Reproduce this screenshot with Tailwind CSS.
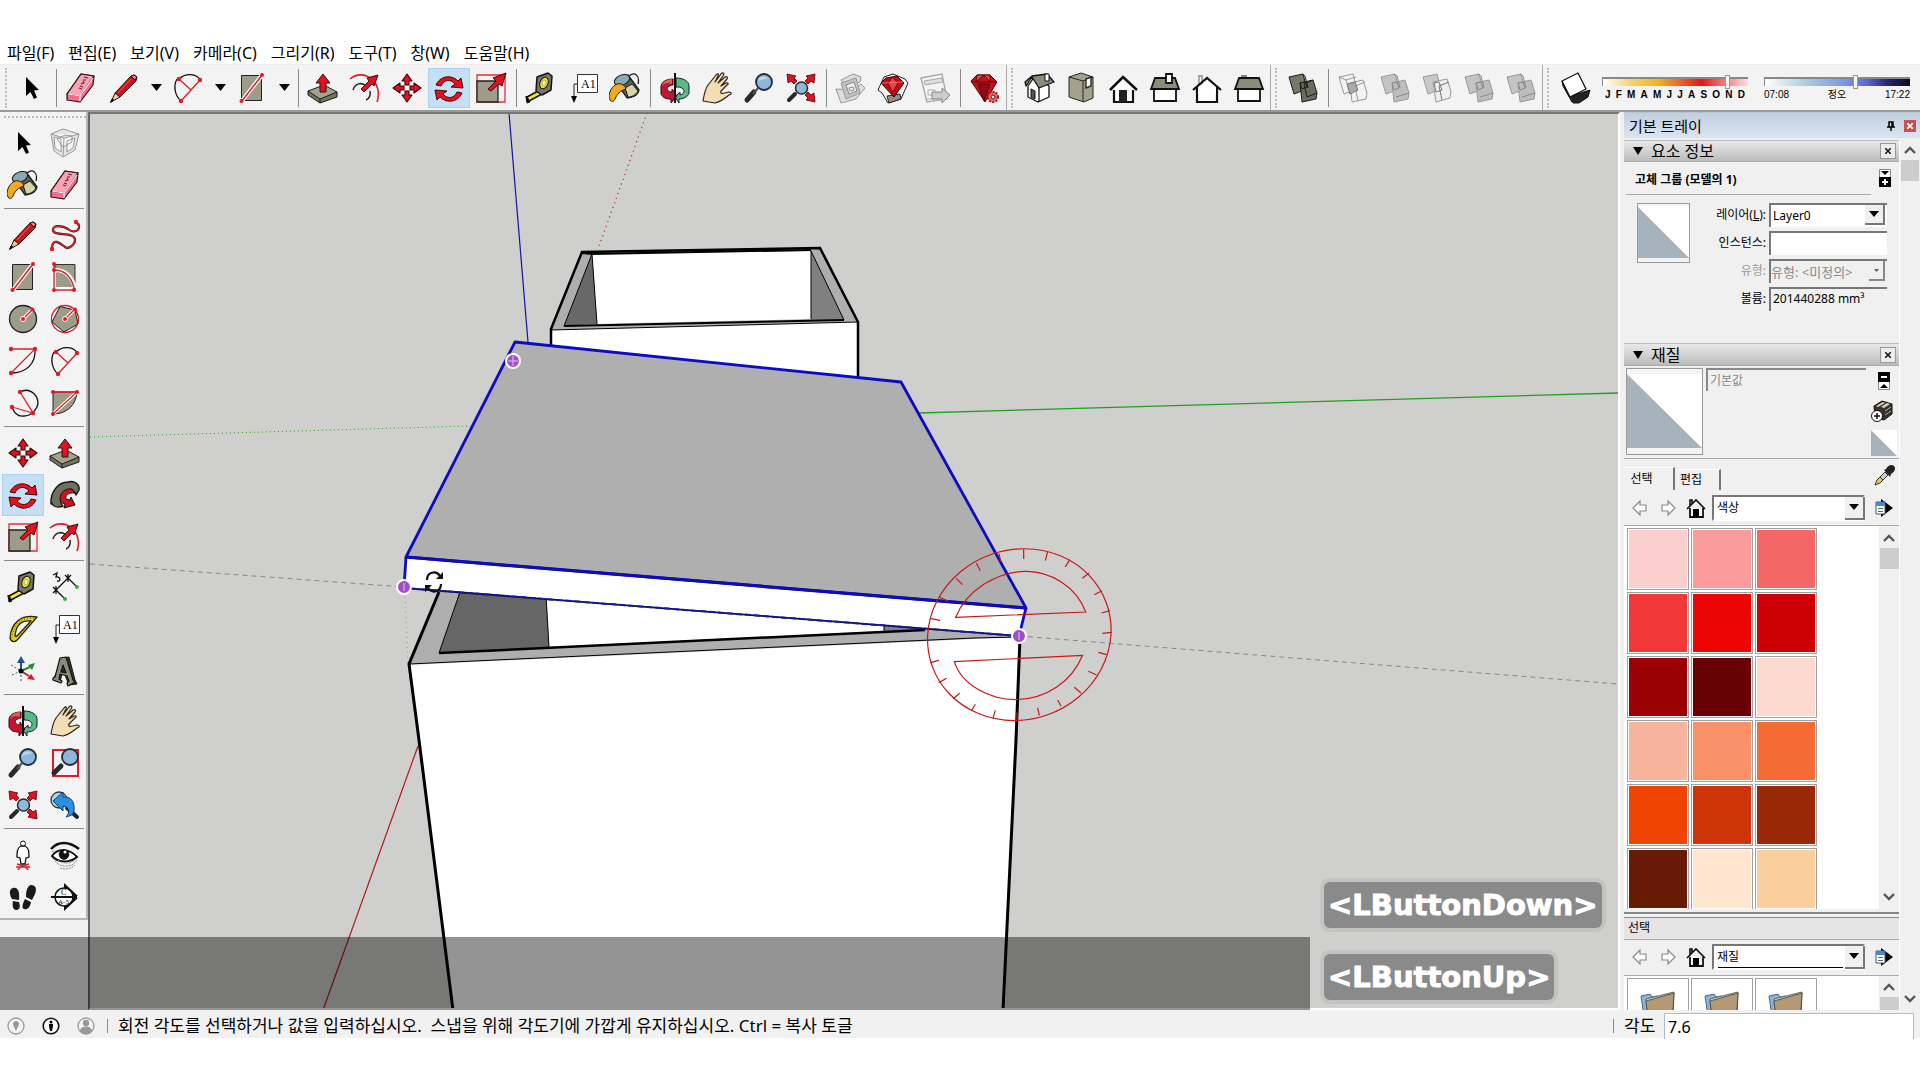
<!DOCTYPE html>
<html lang="ko">
<head>
<meta charset="utf-8">
<title>SketchUp</title>
<script src="https://cdn.jsdelivr.net/npm/@tailwindcss/browser@4"></script>
</head>
<body class="flex h-screen flex-col overflow-hidden bg-white pt-[38px] pb-[42px] font-['Noto_Sans','Noto_Sans_CJK_KR',sans-serif] text-black">

<svg class="hidden" aria-hidden="true">
  <defs>
    <symbol id="cursor" viewBox="0 0 32 32"><path d="M11 5v19l4.500-4 3.500 7 3-1.500-3-7 5-.5z"/></symbol>
    <symbol id="eraser" viewBox="0 0 32 32" stroke="#2a1015" stroke-linejoin="round" stroke-width="1.200"><path fill="#f26d88" d="M2 22 16 2l13 2-1 9-13 17-13-2z"/><path fill="#fba3b4" d="M2 22 16 2l13 2-14 20z"/><path fill="none" stroke="#fff" d="M15 24v5M3 22l12 2L28 6"/><path fill="none" stroke="#7a1c30" d="m14 16 3 1m-2-3 3 1m-2-3 3-1-1-2m0-1 3 0m-2-3 4 1"/></symbol>
    <symbol id="pencil" viewBox="0 0 32 32" stroke="#1c1010" stroke-linejoin="round"><path fill="#c9171e" d="M7 21 23 4l3-1 3 2-1 4-16 16z"/><path fill="#e4cf9c" d="M7 21 3 30l9-5z"/><path d="m4 27-1.500 3.500L6 28z"/><path fill="#e88" d="m23 4 3-1 3 2-2 3z"/><path fill="none" stroke="#ef5a5a" d="M10 21 23 7"/></symbol>
    <symbol id="arc" viewBox="0 0 32 32" fill="none" stroke-width="1.300"><path stroke="#111" d="M7 7C14 0 25 2 28 8M5 7C1 14 3 24 9 29"/><path stroke="#d8202a" d="m28 8-19 21M7 7l12 11"/><g fill="#e01b26"><circle cx="7" cy="7" r="2.200"/><circle cx="28" cy="8" r="2.200"/><circle cx="9" cy="29" r="2.200"/></g></symbol>
    <symbol id="rect" viewBox="0 0 32 32"><path fill="#9c9c88" stroke="#222" d="M5.500 3.500h20v25h-20z"/><path stroke="#fff" stroke-width="4" d="m6 29 20-26"/><path stroke="#d8202a" stroke-width="1.500" d="m6 29 20-26"/><g fill="#e01b26"><circle cx="5.500" cy="29" r="2"/><circle cx="26" cy="3" r="2"/></g></symbol>
    <symbol id="push" viewBox="0 0 32 32" stroke="#1b1b18" stroke-linejoin="round"><path fill="#74745f" d="M1 19v4l12 8 17-6v-5z"/><path fill="#a3a38d" d="m1 19 16-6 13 7-17 7z"/><path d="M13 27v4" /><path fill="#e5101d" d="M13 20v-9H9l7-9 7 9h-4v9z"/></symbol>
    <symbol id="offset" viewBox="0 0 32 32" fill="none"><path stroke="#d8202a" stroke-width="1.600" d="M1 7c14-12 34 4 27 23"/><path stroke="#222" stroke-width="1.500" d="M4 18c2-7 9-8 13-4M21 19c1 4-1 8-4 9"/><path fill="#e5101d" stroke="#40060a" d="m12 17 8-8-2-3 11-3-4 11-2-2-8 8z"/></symbol>
    <symbol id="move" viewBox="0 0 32 32" fill="#e5101d" stroke="#330508" stroke-width="1.100" stroke-linejoin="round"><path id="mv" d="m16 2 5 7h-3v4h-4V9h-3z"/><use href="#mv" transform="rotate(90 16 16)"/><use href="#mv" transform="rotate(180 16 16)"/><use href="#mv" transform="rotate(270 16 16)"/></symbol>
    <symbol id="rotate" viewBox="0 0 32 32" fill="#e5101d" stroke="#40060a" stroke-linejoin="round"><path id="rt" d="M3 13C7 4 18 2 25 9l3-3 2 10-12-1 4-3C18 7 11 7 8 14z"/><use href="#rt" transform="rotate(180 16 17)"/></symbol>
    <symbol id="scale" viewBox="0 0 32 32"><path fill="none" stroke="#e0303a" stroke-width="1.300" d="M2 3h28v27H2z"/><path fill="#9c9c88" stroke="#222" stroke-width="1.300" d="M2 9h21v21H2z"/><path fill="#e5101d" stroke="#40060a" d="m13 17 8-8-3-3 13-5-4 13-3-2-8 7z"/></symbol>
    <symbol id="tape" viewBox="0 0 32 32" stroke="#111" stroke-linejoin="round"><path fill="#f4e91f" stroke-width="1.500" d="m2 25 13-7 2 4-13 7z"/><path d="m1 24 4 6-3 1-1-6z"/><path fill="#777765" stroke-width="1.500" d="m12 5 11-4 4 3-1 14-9 5-6-4z"/><ellipse cx="19" cy="11" rx="4" ry="6" fill="#f4e91f" transform="rotate(20 19 11)"/><ellipse cx="19" cy="11" rx="2" ry="3" fill="#f9f59c" stroke="#aa8"/></symbol>
    <symbol id="text" viewBox="0 0 32 32"><path fill="#fff" stroke="#333" d="M10.500 2.500h20v18h-20z"/><path fill="none" stroke="#222" d="M10 12H7v13"/><path d="M4 24h6l-3 7z"/><text x="14" y="16" font-size="12" font-family="Liberation Serif, serif">A1</text></symbol>
    <symbol id="bucket" viewBox="0 0 32 32" stroke="#1a1a1a" stroke-linejoin="round"><path fill="none" stroke-width="1.300" d="M20 4c6-5 11 0 9 8"/><path fill="#5e5e50" stroke-width="1.300" d="M6 9 19 3l11 15c-1 6-8 8-12 8z"/><path fill="#d9d3a8" d="m16 16 7-4 6 7c-2 4-6 6-10 6z"/><ellipse cx="13" cy="8" rx="8" ry="5" fill="#89a9b5" transform="rotate(-22 13 8)"/><path fill="#f4a81a" d="M8 12C3 14 0 20 0 25c1 5 4 6 6 2 2-5 5-8 11-10-1-4-5-6-9-5z"/></symbol>
    <symbol id="orbit" viewBox="0 0 32 32" stroke-linejoin="round"><path fill="#59b983" stroke="#123" d="M17 6c7 0 13 3 13 8v7c-1 4-6 6-10 6v4l-4-6 5-5v3c4-1 5-4 3-6-2-2-4-2-7-2z"/><path fill="#c31432" stroke="#3a0610" d="M14 7C7 7 2 10 2 15v7c2 4 5 5 10 5v4l6-7-5-7v3c-4 0-6-3-4-5 1-1 3-2 5-2z"/><path fill="#cf6259" d="M13 7C8 7 3 10 3 14c2-3 6-4 10-2z"/><path stroke="#111" stroke-width="2" d="M16 1v30"/></symbol>
    <symbol id="hand" viewBox="0 0 32 32"><path fill="#f3ddb5" stroke="#2d2518" stroke-width="1.200" stroke-linejoin="round" d="M2 29c1-6 2-12 5-16l8-10c2-2 3-1 2 1l-3 6 6-8c2-2 4-1 2 2l-5 7 7-6c2-1 3 0 2 2l-6 7 5-3c2-1 3 1 1 2l-6 6c-1 3 1 3 8 1 3 0 3 2 0 3-7 6-10 7-14 8z"/></symbol>
    <symbol id="zoom" viewBox="0 0 32 32"><path stroke="#252a30" stroke-width="5" stroke-linecap="round" d="m4 28 7-8"/><path stroke="#555" stroke-width="2" d="m10 22 5-6"/><circle cx="21" cy="10" r="8" fill="#8db8dc" stroke="#252a30" stroke-width="1.800"/><path fill="#bcd8ee" d="M15 9c1-5 8-6 10-2-4-1-6 1-10 2z"/></symbol>
    <symbol id="zoomall" viewBox="0 0 32 32"><path stroke="#252a30" stroke-width="4" stroke-linecap="round" d="m4 28 6-6"/><circle cx="16.500" cy="16" r="6" fill="#8db8dc" stroke="#252a30" stroke-width="1.500"/><g fill="#e5101d" stroke="#40060a" stroke-width=".8"><path d="m2 2 9 2-2 2 3 3-3 3-3-3-3 2zM30 2l-9 2 2 2-3 3 3 3 3-3 3 2zM30 30l-9-2 2-2-3-3 3-3 3 3 3-2z"/></g></symbol>
    <symbol id="zoomwin" viewBox="0 0 32 32"><path fill="none" stroke="#e01b26" stroke-width="2" d="M4 3h25v26H4z"/><path stroke="#252a30" stroke-width="5" stroke-linecap="round" d="m5 26 7-7"/><circle cx="21" cy="10" r="8" fill="#8db8dc" stroke="#252a30" stroke-width="1.800"/></symbol>
    <symbol id="zoomprev" viewBox="0 0 32 32"><circle cx="10" cy="11" r="8" fill="#b7d3e8" stroke="#333" stroke-width="1.300"/><path stroke="#1c1f24" stroke-width="4" stroke-linecap="round" d="m18 19 10 9"/><path fill="#2b8fe4" stroke="#0d3c68" stroke-linejoin="round" d="M4 12 14 3v5c8-1 12 5 11 14-1 4-4 5-8 6 4-4 4-10-3-11v5z"/></symbol>
    <symbol id="whouse" viewBox="0 0 32 32" fill="#ddd" stroke="#999"><path d="M6 8 18 2l8 3-1 5-15 4zM1 17l5 14 15-4 9-11-4-4-9 6z"/><path fill="#c2c2c2" d="m6 11 15-5 4 15-14 6z"/><path fill="#eee" stroke="#888" d="m11 13 8-3 3 9-8 3zM14 16l4-1 1 3-4 1z"/></symbol>
    <symbol id="wruby" viewBox="0 0 32 32" stroke="#222" stroke-linejoin="round"><path fill="#f4f4f4" d="m7 5 9-3 12 5 3 4-7 16-13 4-6-10-4-3z"/><path fill="#8f8f84" d="m10 24 13-2 1 5-12 4z"/><path fill="#b80f18" stroke="#400" d="m4 11 5-5 11-2 7 7-10 14z"/><path fill="#e64348" stroke="#700" d="m11 12 4-7 6 6-5 9z"/><path fill="none" stroke="#f77" stroke-width=".8" d="m5 11 21-1"/></symbol>
    <symbol id="wsend" viewBox="0 0 32 32" stroke="#aaa"><path fill="#f4f4f4" stroke-width="1.400" d="m2 6 21-4 5 25-20 3z"/><path fill="#ddd" d="m5 9 18-3 1 4-18 3z"/><path fill="none" d="M9 18h7v5H9zM8 27h8"/><path fill="#ccc" stroke="#888" d="M13 20h10v-4l8 7-8 8v-4H13z"/></symbol>
    <symbol id="ruby" viewBox="0 0 32 32" stroke="#5c060b" stroke-linejoin="round"><path fill="#c4111a" d="m2 9 6-6h13l7 7-12 20z"/><path fill="#8f0c13" d="m9 12 6 17 6-17z"/><path fill="#e54a4c" d="m8 3-1 7 8-7 6 7V3z"/><path d="M2 10h26" /><circle cx="24" cy="25" r="5" fill="#d77" stroke="#a11" stroke-width="2" stroke-dasharray="2 1.200"/><circle cx="24" cy="25" r="2" fill="#f3f3f3"/></symbol>
    <symbol id="iso" viewBox="0 0 32 32" stroke="#111" stroke-linejoin="round"><path fill="#fff" stroke-width="1.300" d="M5 14 12 4l14 10v11l-11 5-10-5z"/><path fill="#8b8b7a" stroke-width="1.300" d="m2 10 7-6 15-2 7 8-15 6-7-11-6 9z"/><path stroke-width="1.300" d="M16 16v14"/><path fill="#555" d="m8 17 4 2v8l-4-2z"/><path fill="#fff" d="M22 2h4v7h-4z"/></symbol>
    <symbol id="top" viewBox="0 0 32 32" stroke="#26261f"><path fill="#a3a38d" d="m4 5 12-4 12 4v21l-9 4-15-5z"/><path fill="none" d="M4 5l14 4 10-4M18 9v21"/><path fill="#fff" stroke-width="1.400" d="m21 7 5-2v9l-5 2z"/></symbol>
    <symbol id="front" viewBox="0 0 32 32"><path fill="#fff" stroke="#111" stroke-width="2.200" d="M7 17v13h19V17"/><path fill="#fff" stroke="#111" stroke-width="2.600" d="M3 18 16 5l14 13"/><path fill="#222" d="M12 18h8v12h-8z"/></symbol>
    <symbol id="right" viewBox="0 0 32 32" stroke="#111" stroke-width="1.800"><path fill="#fff" d="M5 16h22v13H5z"/><path fill="#8b8b7a" d="m6 6-4 11h28L26 6z"/><path fill="#fff" d="M17 2h6v9h-6z"/></symbol>
    <symbol id="back" viewBox="0 0 32 32" stroke="#111" stroke-width="2.200"><path fill="#fff" stroke="#888" stroke-width="1.400" d="M8 4h3v8H8z"/><path fill="#fff" d="M6 15v15h20V15"/><path fill="none" stroke-width="2.200" d="M2 18 16 6l14 12"/><path fill="#fff" stroke="none" d="m16 8 9 8v6H7v-6z"/></symbol>
    <symbol id="left" viewBox="0 0 32 32" stroke="#111" stroke-width="1.800"><path fill="#fff" d="M5 16h22v13H5z"/><path fill="#8b8b7a" d="m6 6-4 11h28L26 6z"/><path stroke="#777" d="M8 4h6"/></symbol>
    <symbol id="shell" viewBox="0 0 32 32" stroke="#1c1c18" stroke-linejoin="round"><path fill="#77776a" d="m2 5 14-3 4 15-13 5z"/><path fill="#6b6b5f" d="m13 11 13-3 4 13-1 6-14 3z"/><path fill="none" d="m15 2 3 2 3 12M26 8l-9 4 3 13 10-4M13 11l5-1 2 5-5 2z"/></symbol>
    <symbol id="bool" viewBox="0 0 32 32" stroke="#989898" stroke-linejoin="round"><path fill="#c4c4c4" d="m2 5 14-3 4 15-13 5z"/><path fill="#bdbdbd" d="m13 11 13-3 4 13-1 6-14 3z"/><path fill="none" stroke="#888" d="m15 2 3 2 3 12M30 21l-13 4M13 11l5-1 2 6-5 2z"/></symbol>
    <symbol id="bool1" viewBox="0 0 32 32" fill="none" stroke="#999" stroke-linejoin="round"><path d="m2 5 14-3 4 15-13 5zM2 5l7 3 4 14M9 8l10-3M13 11l13-3 4 13-1 6-14 3zM13 11l5 3 3 15M18 14l10-4"/><path fill="#aaa" stroke="#777" d="m10 12 8-2 3 8-8 4z"/></symbol>
    <symbol id="bool2" viewBox="0 0 32 32" stroke="#999" stroke-linejoin="round"><path fill="#c8c8c8" d="m2 5 14-3 4 15-13 5z"/><path fill="#eee" d="m12 10 14-3 4 13-1 6-14 4z"/><path fill="none" stroke="#777" d="m13 11 5-1 3 8-6 2zM18 14l10-4M18 14l3 14"/></symbol>
    <symbol id="shadow" viewBox="0 0 32 32" stroke="#111" stroke-linejoin="round"><path fill="#222" d="m12 24 19-6-2 7-9 6h-6z"/><path fill="#2c2c2c" d="m3 9 8 16 2 5L4 14z"/><path fill="#fff" stroke-width="1.300" d="M3 9 19 1l8 16-16 8z"/></symbol>
    <symbol id="comp" viewBox="0 0 32 32" fill="#e5e5e5" stroke="#999"><path d="m2 7 12-5 16 5-4 16-12 7L5 24z"/><path fill="#f7f7f7" d="m2 7 13 4 15-4M15 11l-1 19M5 10l7 2v13l-6-4zM18 14l8-3-2 10-6 4zM8 12l8-4 7 1v6l-9 5z"/></symbol>
    <symbol id="freehand" viewBox="0 0 32 32"><path fill="none" stroke="#3c070b" stroke-width="2.200" d="M27 3c8 6-1 13-8 7-5-3-15-5-15 1 0 7 22 1 22 10 0 4-6 10-10 7S3 17 3 30"/><path fill="none" stroke="#d8202a" stroke-width="1.400" d="M27 3c8 6-1 13-8 7-5-3-15-5-15 1 0 7 22 1 22 10 0 4-6 10-10 7S3 17 3 30"/><g fill="#e01b26"><circle cx="27" cy="3" r="2.200"/><circle cx="3" cy="30" r="2.200"/></g></symbol>
    <symbol id="rrect" viewBox="0 0 32 32" fill="none"><path fill="#9c9c88" stroke="#333" d="M6 3.500h20v25H6z"/><path stroke="#fff" stroke-width="4" d="M5 9c10-1 18 6 21 18M5 9v19h21"/><path stroke="#d8202a" stroke-width="1.400" d="M5 3v26h20V27C22 15 15 9 5 9"/><g fill="#e01b26"><circle cx="5" cy="3" r="2"/><circle cx="5" cy="9" r="2"/><circle cx="5" cy="29" r="2"/><circle cx="25" cy="29" r="2"/></g></symbol>
    <symbol id="circle" viewBox="0 0 32 32"><circle cx="16" cy="16" r="13.500" fill="#9c9c88" stroke="#222" stroke-width="1.300"/><path stroke="#fff" stroke-width="3.500" d="m16 16 9-9"/><path stroke="#d8202a" stroke-width="1.400" d="m16 16 9-9"/><circle cx="16" cy="16" r="2.500" fill="#e01b26" stroke="#fff"/><circle cx="25.500" cy="6.500" r="2" fill="#e01b26"/></symbol>
    <symbol id="polygon" viewBox="0 0 32 32"><circle cx="16" cy="16" r="13.500" fill="none" stroke="#d8202a" stroke-width="1.300"/><path fill="#9c9c88" stroke="#222" d="M11 3.500 26 7l3 14-14 8L3 19z"/><path stroke="#fff" stroke-width="3.500" d="m16 16 9-9"/><path stroke="#d8202a" stroke-width="1.400" d="m16 16 9-9"/><circle cx="16" cy="16" r="2.500" fill="#e01b26" stroke="#fff"/><circle cx="26" cy="6.500" r="2" fill="#e01b26"/></symbol>
    <symbol id="arc2" viewBox="0 0 32 32" fill="none"><path stroke="#111" stroke-width="1.300" d="M28 4c1 15-9 24-24 24"/><path stroke="#d8202a" stroke-width="1.300" d="M4 4h24L4 28"/><g fill="#e01b26"><circle cx="4" cy="4" r="2.200"/><circle cx="28" cy="4" r="2.200"/><circle cx="4" cy="28" r="2.200"/></g></symbol>
    <symbol id="arc3" viewBox="0 0 32 32" fill="none"><path stroke="#111" stroke-width="1.300" d="M13 5c9-5 17 2 18 10 0 7-7 14-14 14-7 1-10-3-12-9"/><path stroke="#d8202a" stroke-width="1.300" d="m13 5 13 21L5 20"/><g fill="#e01b26"><circle cx="13" cy="5" r="2.200"/><circle cx="26" cy="26" r="2.200"/><circle cx="5" cy="20" r="2.200"/></g></symbol>
    <symbol id="pie" viewBox="0 0 32 32" fill="none"><path fill="#9c9c88" stroke="#222" d="M4 5h24c-1 13-10 22-24 22z"/><path stroke="#fff" stroke-width="3.500" d="M28 5 4 27"/><path stroke="#d8202a" stroke-width="1.300" d="M4 5h24L4 27"/><g fill="#e01b26"><circle cx="4" cy="5" r="2"/><circle cx="28" cy="5" r="2"/><circle cx="4" cy="27" r="2"/></g></symbol>
    <symbol id="follow" viewBox="0 0 32 32" stroke="#111" stroke-linejoin="round"><path fill="#70705f" stroke-width="1.400" d="M2 25C1 12 10 3 19 3c6-2 12 2 11 8l-3 5c-2-7-11-5-14 1-2 5-2 8 1 10-5 2-10 1-12-4z"/><path fill="#c8161f" d="M11 20c0-7 6-11 12-10l3 4c-7-1-10 3-9 6l4 1 1-3 4 8-11 3 1-4c-3-1-5-2-5-5z"/></symbol>
    <symbol id="dim" viewBox="0 0 32 32" fill="none" stroke="#111" stroke-width="1.300"><path d="M7 19 19 7M7 19l9 9M19 7l9 9M4 16l6 6m0-6-6 6m3-7v8M16 4l6 6m0-6-6 6m3-7v8"/><path d="m4 4 4-2-1 4c5-1 5 5 1 4"/><g fill="#3cae3c" stroke="none"><circle cx="16" cy="28" r="2"/><circle cx="28" cy="16" r="2"/></g></symbol>
    <symbol id="protractor" viewBox="0 0 32 32" stroke="#2a2400" stroke-width="1.300" stroke-linejoin="round"><path fill="#e8cd1b" fill-rule="evenodd" d="M30 4C14 1 4 10 3 25c1 4 5 5 8 1zM24 8C14 7 9 12 8 23c1 1 2 0 3-1z"/><path stroke-width=".8" stroke-dasharray="1 2" fill="none" d="M27 5C13 4 6 12 5 25"/></symbol>
    <symbol id="axes" viewBox="0 0 32 32"><path stroke="#1c4da0" stroke-width="2" d="M14 16V6"/><path fill="#1c4da0" d="m14 1 4 7h-8z"/><path stroke="#208a35" stroke-width="2" d="m14 16 9-4"/><path fill="#208a35" d="m28 8-3 7-4-5z"/><path stroke="#cf1b22" stroke-width="2" d="m14 16 8 5"/><path fill="#cf1b22" d="m28 25-8-1 4-5z"/><path stroke="#cf1b22" stroke-dasharray="2 2" d="M4 10l10 6"/><path stroke="#208a35" stroke-dasharray="2 2" d="m5 20 9-4"/><path stroke="#1c4da0" stroke-dasharray="2 2" d="M14 16v12"/><circle cx="14" cy="16" r="2.500"/></symbol>
    <symbol id="text3d" viewBox="0 0 32 32" stroke="#15150f" stroke-linejoin="round"><path fill="#33332b" d="m14 3 6-1 6 23 2 4-8 1-6-15-3 12-7-2z"/><path fill="#8c8c7b" stroke-width="1.200" fill-rule="evenodd" d="m11 3 6-1 7 23 2 2-7 4-1-3 2-2-2-5-7-2-1 5 3 2-1 2-8-3v-2l2-1zm3 7-2 7 5 1z"/></symbol>
    <symbol id="poscam" viewBox="0 0 32 32" fill="none"><path fill="#fff" stroke="#111" stroke-width="1.300" d="M14 7c-4 2-4 6-4 11l3 1 1 6h4l1-6 3-1c0-5 0-9-4-11z"/><circle cx="16" cy="4.500" r="2.500" fill="#fff" stroke="#111"/><path stroke="#e01b26" stroke-width="1.600" d="M10 25c3 1 9 2 11 6M22 25c-3 1-9 2-11 6M9 28h14"/></symbol>
    <symbol id="eye" viewBox="0 0 32 32" fill="none" stroke="#111"><path stroke-width="2.500" d="M2 10C9 2 20 2 30 10"/><path fill="#fff" stroke-width="2" d="M3 17c6-8 17-8 25 1-7 6-19 6-25-1z"/><circle cx="15" cy="15.500" r="4.800" fill="#111"/><circle cx="16" cy="13" r="1.500" fill="#fff" stroke="none"/><path stroke="#888" stroke-dasharray="2 1" d="M6 22c5 7 18 7 22-1M9 21c4 4 13 4 17 0M11 29c5 2 11 1 15-3M3 13l3-2"/></symbol>
    <symbol id="walk" viewBox="0 0 32 32" fill="#1a1a1a"><path d="M6 7c5-1 7 4 6 12l-7-1C2 13 2 8 6 7zM6 20l6 1c2 6 0 8-3 8s-4-4-3-9zM24 4c5 0 6 4 4 9l-3 6-6-3c0-5 1-11 5-12zM18 18l6 3c-1 6-4 8-7 7s-1-6 1-10z"/></symbol>
    <symbol id="section" viewBox="0 0 32 32"><path fill="#111" d="M15 2l14 13H15zM15 30l14-13H15z"/><circle cx="15" cy="16" r="9" fill="#fff" stroke="#111" stroke-width="1.500"/><path stroke="#111" stroke-width="2" d="M2 16h26"/><text x="12" y="14" font-size="8" font-family="Liberation Serif, serif">C</text><text x="9" y="23" font-size="7" font-family="Liberation Serif, serif">A-5</text></symbol>
    <symbol id="navback" viewBox="0 0 16 16"><path fill="#fafafa" stroke="#8b8b8b" stroke-width="1.200" d="M1 8 8 1v4h6v6H8v4z"/></symbol>
    <symbol id="home" viewBox="0 0 20 20"><path fill="#f6f6f6" stroke="#111" stroke-width="1.800" d="M4 10v9h13v-9"/><path fill="none" stroke="#111" stroke-width="1.600" d="m1 11 9-9 9 9M4 8V2h2v4"/><path d="M7 11h6v8H7z"/></symbol>
    <symbol id="details" viewBox="0 0 18 18"><path d="M6 0l12 9-12 9z"/><path fill="#fff" stroke="#456" d="M1 3h9v12H1z"/><path fill="#4d85c8" d="M1 3h9v4H1z"/><path stroke="#567" d="M3 9.500h5M3 12.500h5"/></symbol>
    <symbol id="chev" viewBox="0 0 12 8"><path fill="none" stroke="#555" stroke-width="2.400" d="m1 7 5-5 5 5"/></symbol>
    <symbol id="tri" viewBox="0 0 10 6"><path d="M0 0h10L5 6z"/></symbol>
  </defs>
</svg>

<nav class="flex h-[26px] shrink-0 items-center gap-[14px] pt-1 pl-[7px] text-[16px] leading-5">
  <a href="#">파일(F)</a><a href="#">편집(E)</a><a href="#">보기(V)</a><a href="#">카메라(C)</a><a href="#">그리기(R)</a><a href="#">도구(T)</a><a href="#">창(W)</a><a href="#">도움말(H)</a>
</nav>

<header class="flex h-12 shrink-0 items-center border-t border-b-2 border-t-[#ececec] border-b-[#9a9a9a] bg-[#f3f3f3] pl-1">
  <div id="toolbar" class="flex items-center"></div>
  <div class="flex gap-4 pt-0.5 pl-1.5">
    <div class="w-[146px]">
      <input aria-label="월" type="range" min="0" max="100" value="87" class="block h-[9px] w-full appearance-none border-t-2 border-l border-t-[#888] border-l-[#888] [background-image:linear-gradient(90deg,#fff_0%,#f4d16c_20%,#efb71e_38%,#ea5b2b_55%,#e51515_68%,#f07070_82%,#fbdfe2_100%)] [&::-webkit-slider-thumb]:h-[14px] [&::-webkit-slider-thumb]:w-[5px] [&::-webkit-slider-thumb]:appearance-none [&::-webkit-slider-thumb]:border [&::-webkit-slider-thumb]:border-[#999] [&::-webkit-slider-thumb]:bg-[#f4f4f4]">
      <div class="flex justify-between px-[3px] pt-[3px] font-['Liberation_Sans',sans-serif] text-[10px] leading-3 font-bold"><span>J</span><span>F</span><span>M</span><span>A</span><span>M</span><span>J</span><span>J</span><span>A</span><span>S</span><span>O</span><span>N</span><span>D</span></div>
    </div>
    <div class="w-[146px]">
      <input aria-label="시간" type="range" min="0" max="100" value="63" class="block h-[9px] w-full appearance-none border-t-2 border-l border-t-[#888] border-l-[#888] [background-image:linear-gradient(90deg,#fff_0%,#a9c9dd_30%,#7b96e6_55%,#5a68d8_70%,#22266e_85%,#0a0a14_100%)] [&::-webkit-slider-thumb]:h-[14px] [&::-webkit-slider-thumb]:w-[5px] [&::-webkit-slider-thumb]:appearance-none [&::-webkit-slider-thumb]:border [&::-webkit-slider-thumb]:border-[#999] [&::-webkit-slider-thumb]:bg-[#f4f4f4]">
      <div class="flex justify-between pt-[3px] font-['Liberation_Sans','Noto_Sans_CJK_KR',sans-serif] text-[10px] leading-3"><span>07:08</span><span>정오</span><span>17:22</span></div>
    </div>
  </div>
</header>

<div class="relative flex min-h-0 flex-1 bg-[#f0f0f0]">
  <aside class="w-[88px] shrink-0">
    <div class="h-[808px] border-r-2 border-b-2 border-[#b5b5b5] bg-[#f3f3f3] px-0.5 pt-1">
      <div class="mb-0.5 ml-0.5 h-1 w-[82px] border-t-2 border-dotted border-[#bbb]"></div>
      <div id="sidebar" class="grid w-[84px] grid-cols-2"></div>
    </div>
  </aside>

  <main class="relative min-w-0 flex-1 border-t-2 border-r-2 border-b-2 border-l-2 border-t-[#777] border-r-white border-b-white border-l-[#666] bg-[#cfcfcd]">
    <svg class="block h-full w-full" viewBox="90 114 1528 894" preserveAspectRatio="xMinYMin slice" fill="none">
      <path stroke="#1414a0" stroke-width="1.200" d="m509 113 19 229"/>
      <path stroke="#b02020" stroke-dasharray="1 4" stroke-width="1.300" d="m647 113-49 136"/>
      <path stroke="#2b9a2b" stroke-dasharray="1 3" d="m90 437 379-11"/>
      <path stroke="#22a022" stroke-width="1.300" d="m919 413 699-20"/>
      <path stroke="#888" stroke-dasharray="5 4" d="m90 564 314 23M1019 636l599 48"/>
      <path stroke="#999" stroke-dasharray="1 4" d="m405 592 3 72"/>
      <path stroke="#b01818" stroke-width="1.200" d="m418 746-95 264"/>

      <path fill="#aeaeae" d="m582 252 238-4 38 74v60l-307-37v-16z"/>
      <path fill="#fff" d="m592 254 219-3v68l-214 5zM551 330l307-8v60l-307-37z"/>
      <path fill="#686868" d="m592 254 5 70-33 2z"/><path fill="#808080" d="m811 251 33 69-33 1z"/>
      <path stroke="#000" d="m564 326 28-72 5 70M811 319v-68l33 69M551 330l307-8"/>
      <path stroke="#000" stroke-width="2" d="m564 326 280-6"/>
      <path stroke="#000" stroke-width="2.500" d="M551 345v-16l31-77 238-4 38 74v56"/>
      <path stroke="#000" stroke-width="2" d="m582 253 10 1 219-4"/>

      <path fill="#aeaeae" d="m439 592-30 72 611-27-200-40z"/>
      <path fill="#666" d="m460 592-21 61 110-6-3-55z"/>
      <path fill="#fff" d="m546 592 3 55 335-16v-31z"/>
      <path fill="#808088" d="M884 620v11l41-1v-10z"/>
      <path fill="#fff" d="m409 665 610-28-16 373H453z"/>
      <path stroke="#000" d="m460 592-21 61M546 595l3 52M884 625v6M409 664l565-26 45-1"/>
      <path stroke="#000" stroke-width="2.500" d="m439 653 486-23"/>
      <path stroke="#000" stroke-width="3" d="m439 592-30 72 10 76 34 270M1020 637l-4 103-13 270"/>

      <path fill="#afafaf" d="m515 342 386 40 125 226-620-51z"/>
      <path fill="#fff" d="m406 557 620 51-7 28-615-48z"/>
      <path stroke="#0c0cc0" stroke-width="2.800" stroke-linejoin="round" d="m406 557 109-215 386 40 125 226z"/>
      <path stroke="#0c0cb8" stroke-width="3.200" d="m406 557 620 51"/>
      <path stroke="#0c0cc0" stroke-width="2.800" d="m406 557-2 31M1026 608l-7 28"/>
      <path stroke="#111" stroke-width="1.800" d="m404 588 615 48"/><path stroke="#1515c0" stroke-width="2" stroke-dasharray="6 3" d="m404 588 615 48"/>

      <g transform="translate(900 530) scale(.3333)" stroke="#c81818" stroke-width="3.600">
        <ellipse cx="358" cy="314" rx="278" ry="255" transform="rotate(-20 358 314)"/>
        <path d="m167 262 390-16c-27-76-107-124-182-122-85 2-175 56-208 138zM163 395l385-19c-33 79-108 131-198 133-80 1-165-44-187-114z"/>
        <path d="M371 58v29M443 65l-7 27M509 89l-13 22M567 129l-20 16M606 182l-23 12M630 242l-25 7M635 307l-28 3M620 374l-25-7M590 435l-25-11M543 489l-20-17M483 528l-10-18M418 557l-5-23M351 571v-24M279 565l7-24M214 543l12-20M159 507l20-17M116 458l24-13M90 398l27-7M90 265l30 6M119 202l26 12M168 145l20 19M229 100l12 22M297 70l5 24"/>
      </g>
      <g fill="#a04fc8" stroke="#fff" stroke-width="2"><circle cx="513" cy="361" r="7"/><circle cx="404" cy="587" r="7"/><circle cx="1019" cy="636" r="7"/></g>
      <path stroke="#e3c8f0" d="M513 356v10M508 361h10M404 583v8M1019 632v8"/>
      <path stroke="#111" stroke-width="2.200" d="M427 580c0-8 9-10 13-4M441 584c0 8-9 10-13 4"/>
      <path fill="#111" d="M443 572v7h-7zM425 592v-7h7z"/>
    </svg>
    <div class="absolute bottom-2 left-[1234px] flex flex-col items-start gap-[26px] text-[29px] leading-[46px] font-bold text-white">
      <kbd class="rounded-md bg-[#8a8a8a] px-1 font-['DejaVu_Sans',sans-serif] shadow-[0_0_0_4px_#c3c3c2] [-webkit-text-stroke:1px_white]">&lt;LButtonDown&gt;</kbd>
      <kbd class="rounded-md bg-[#8a8a8a] px-1 font-['DejaVu_Sans',sans-serif] shadow-[0_0_0_4px_#c3c3c2] [-webkit-text-stroke:1px_white]">&lt;LButtonUp&gt;</kbd>
    </div>
  </main>
  <div class="absolute bottom-0 left-0 h-[73px] w-[1310px] bg-black/42"></div>

  <aside class="flex w-[300px] shrink-0 flex-col pl-1 text-[12px] leading-4">
    <div class="flex h-[26px] shrink-0 items-center border-t border-[#b8c4d0] bg-linear-to-b from-[#c2cfde] to-[#d9e5f3] pl-[5px]">
      <h2 class="flex-1 text-[15px]">기본 트레이</h2>
      <button aria-label="고정" class="mr-[9px]"><svg class="h-2.5 w-2" viewBox="0 0 8 10"><path fill="none" stroke="#000" stroke-width="1.500" d="M2 6V1h4v5M0 6h8M4 6v4M5 1v5"/></svg></button>
      <button aria-label="닫기" class="mr-1 flex h-3 w-3 items-center justify-center bg-[#c75050]"><svg class="h-1.5 w-1.5" viewBox="0 0 6 6"><path stroke="#fff" stroke-width="1.600" d="m0 0 6 6M6 0 0 6"/></svg></button>
    </div>
    <div class="flex min-h-0 flex-1 pt-0.5">
      <div class="flex w-[276px] shrink-0 flex-col border-r border-white">
        <section class="h-[203px] shrink-0">
          <div class="flex h-[22px] items-center border-t border-b border-t-[#bbb] border-b-[#aaa] bg-linear-to-b from-[#e9e9e9] to-[#bcbcbc] pl-[9px]">
            <svg class="h-2 w-2.5" viewBox="0 0 10 8"><path d="M0 0h10L5 8z"/></svg>
            <h3 class="flex-1 pl-2 text-[16px] leading-5">요소 정보</h3>
            <button aria-label="요소 정보 닫기" class="mr-[3px] flex h-4 w-4 items-center justify-center border border-[#999] bg-[#ececec]"><svg class="h-1.5 w-1.5" viewBox="0 0 6 6"><path stroke="#111" stroke-width="1.500" d="m0 0 6 6M6 0 0 6"/></svg></button>
          </div>
          <div class="flex justify-between pr-2 pl-0.5">
            <div class="w-[245px] border-b border-[#aaa] pt-2.5 pb-1.5 pl-[9px] text-[12px] font-bold">고체 그룹 (모델의 1)</div>
            <button aria-label="세부 정보 표시" class="mt-[7px] self-start"><svg class="block h-[18px] w-3" viewBox="0 0 12 18"><path fill="#fff" stroke="#888" d="M.5.5h11v8H.5z"/><path d="M2 2h8L6 6zM0 8h12v10H0z"/><path stroke="#fff" stroke-width="2" d="M6 10v6M3 13h6"/></svg></button>
          </div>
          <div class="flex pt-2 pl-[13px]">
            <div class="mr-[18px] h-[60px] w-[53px] border border-[#999] bg-[#f4f4f4] pt-[3px] pb-1"><svg class="h-full w-full bg-white" viewBox="0 0 10 10" preserveAspectRatio="none"><path fill="#a6b3bc" d="M0 0v10h10z"/></svg></div>
            <div class="grid grid-cols-[58px_118px] gap-x-[3px] gap-y-1 text-right">
              <label for="layer" class="pt-1 whitespace-nowrap">레이어(<u>L</u>):</label>
              <span class="relative block h-6"><select id="layer" class="h-full w-full appearance-none border-t-2 border-l-2 border-t-[#777] border-l-[#777] bg-white pl-0.5"><option>Layer0</option></select><i class="pointer-events-none absolute top-0.5 right-0.5 flex h-5 w-5 items-center justify-center border-r-2 border-b-2 border-[#777] bg-[#f0f0f0]"><svg class="h-1.5 w-2.5"><use href="#tri"/></svg></i></span>
              <label for="inst" class="pt-1">인스턴스:</label>
              <input id="inst" class="h-6 border-t-2 border-l-2 border-[#777] border-r-white bg-white px-0.5">
              <label for="type" class="pt-1 text-[#999]">유형:</label>
              <span class="relative block h-6"><select id="type" disabled class="h-full w-full appearance-none border-t-2 border-l-2 border-t-[#777] border-l-[#777] bg-[#f0f0f0] text-[13px] text-[#888] opacity-100"><option>유형: &lt;미정의&gt;</option></select><i class="pointer-events-none absolute top-0.5 right-0.5 flex h-5 w-4 items-center justify-center border-r-2 border-b-2 border-[#888] bg-[#f0f0f0]"><svg class="h-[3px] w-[5px] opacity-60"><use href="#tri"/></svg></i></span>
              <label for="vol" class="pt-1">볼륨:</label>
              <input id="vol" readonly value="201440288 mm³" class="h-6 border-t-2 border-l-2 border-[#777] px-0.5 pb-1">
            </div>
          </div>
        </section>

        <section class="flex min-h-0 flex-1 flex-col">
          <div class="flex h-[23px] shrink-0 items-center border-t border-b border-t-[#bbb] border-b-[#aaa] bg-linear-to-b from-[#e9e9e9] to-[#bcbcbc] pl-[9px]">
            <svg class="h-2 w-2.5" viewBox="0 0 10 8"><path d="M0 0h10L5 8z"/></svg>
            <h3 class="flex-1 pl-2 text-[16px] leading-5">재질</h3>
            <button aria-label="재질 닫기" class="mr-[3px] flex h-4 w-4 items-center justify-center border border-[#999] bg-[#ececec]"><svg class="h-1.5 w-1.5" viewBox="0 0 6 6"><path stroke="#111" stroke-width="1.500" d="m0 0 6 6M6 0 0 6"/></svg></button>
          </div>
          <div class="flex h-[93px] shrink-0 border-b border-[#aaa] pt-0.5 pl-0.5">
            <div class="h-[87px] w-[77px] border border-[#999] bg-[#f4f4f4] pt-[5px] pb-1.5"><svg class="h-full w-full bg-white" viewBox="0 0 10 10" preserveAspectRatio="none"><path fill="#a6b3bc" d="M0 0v10h10z"/></svg></div>
            <input aria-label="재질 이름" disabled value="기본값" class="ml-[3px] h-[23px] w-40 border-t-2 border-l-2 border-[#888] px-0.5 pb-0.5 text-[#888]">
            <div class="flex flex-1 flex-col items-end gap-2 pt-1 pr-0.5">
              <button aria-label="보조 창 숨기기" class="pr-[7px]"><svg class="block h-[18px] w-3" viewBox="0 0 12 18"><path fill="#fff" stroke="#888" d="M.5 9.500h11v8H.5z"/><path d="M2 16h8l-4-4zM0 0h12v10H0z"/><path stroke="#fff" stroke-width="2" d="M3 5h6"/></svg></button>
              <button aria-label="재질 만들기" class="mt-0.5 pr-1"><svg class="block h-[22px] w-[22px]" viewBox="0 0 22 22"><path fill="#33332c" stroke="#111" d="m3 6 8-5 10 3v10l-8 6-9-2z"/><path fill="#d8d4b0" d="m5 6 7-4 2 1-7 4zM10 7l6-4 3 1-6 4z"/><path stroke="#aaa" d="m14 11 6-4M14 15l6-4"/><circle cx="6" cy="16" r="5.500" fill="#fff" stroke="#111"/><path stroke="#111" stroke-width="1.500" d="M6 13v6M3 16h6"/></svg></button>
              <svg class="h-[26px] w-[26px] bg-white" viewBox="0 0 10 10"><path fill="#a6b3bc" d="M0 0v10h10z"/></svg>
            </div>
          </div>
          <div class="flex h-[31px] shrink-0 items-end justify-between pr-1">
            <div class="flex items-end" role="tablist">
              <button role="tab" class="h-[23px] w-[51px] border-t border-r-2 border-t-white border-r-[#777] pr-3.5">선택</button>
              <button role="tab" class="h-[21px] w-[46px] border-t border-r-2 border-t-white border-r-[#777] pr-3">편집</button>
            </div>
            <button aria-label="샘플 채색" class="mb-1"><svg class="block h-[21px] w-[21px]" viewBox="0 0 21 21"><path fill="#e8c463" stroke="#333" d="m1 20 2-5 8-8 3 3-8 8z"/><path fill="#ccc" stroke="#333" d="m6 12 5-5 3 3-5 5z"/><path fill="#222" d="m10 5 2-1c2-4 6-5 8-3s1 6-3 8l-1 3z"/></svg></button>
          </div>
          <div class="flex h-9 shrink-0 items-center border-b border-[#aaa] pr-1.5 pl-2">
            <button aria-label="뒤로"><svg class="block h-4 w-4"><use href="#navback"/></svg></button>
            <button aria-label="앞으로" class="ml-3 rotate-180"><svg class="block h-4 w-4"><use href="#navback"/></svg></button>
            <button aria-label="모델 안" class="ml-2.5"><svg class="block h-5 w-5"><use href="#home"/></svg></button>
            <span class="relative ml-1.5 block h-[26px] w-[156px]"><select aria-label="재질 모음" class="h-full w-full appearance-none border-2 border-[#777] border-r-white border-b-white bg-white pl-[3px]"><option>색상</option></select><i class="pointer-events-none absolute top-0.5 right-0 flex h-[23px] w-5 items-center justify-center border-r-2 border-b-2 border-[#777] bg-[#f0f0f0]"><svg class="h-1.5 w-2.5"><use href="#tri"/></svg></i></span>
            <button aria-label="세부 정보" class="ml-2.5"><svg class="block h-[18px] w-[18px]"><use href="#details"/></svg></button>
          </div>
          <div class="flex min-h-0 flex-1 justify-between overflow-hidden bg-white">
            <div id="swatches" class="grid auto-rows-min grid-cols-3 gap-0.5 pt-0.5 pl-[3px]"></div>
            <div class="flex w-5 flex-col items-center bg-[#f0f0f0] py-2"><svg class="h-2 w-3"><use href="#chev"/></svg><i class="mt-1.5 h-[21px] w-[19px] shrink-0 bg-[#cdcdcd]"></i><svg class="mt-auto h-2 w-3 rotate-180"><use href="#chev"/></svg></div>
          </div>
          <div class="mt-[3px] h-1.5 shrink-0 border-t-2 border-b border-[#888]"></div>
          <div class="h-[22px] shrink-0 border-b border-[#aaa] bg-[#e6e4e5] pt-0.5 pl-1">선택</div>
          <div class="flex h-9 shrink-0 items-center border-b border-[#aaa] pr-1.5 pb-0.5 pl-2">
            <button aria-label="뒤로"><svg class="block h-4 w-4"><use href="#navback"/></svg></button>
            <button aria-label="앞으로" class="ml-3 rotate-180"><svg class="block h-4 w-4"><use href="#navback"/></svg></button>
            <button aria-label="모델 안" class="ml-2.5"><svg class="block h-5 w-5"><use href="#home"/></svg></button>
            <span class="relative ml-1.5 block h-[26px] w-[156px]"><select aria-label="보조 재질 모음" class="h-full w-full appearance-none border-2 border-[#777] border-r-white border-b-white bg-white pl-[3px]"><option>재질</option></select><i class="absolute bottom-0.5 left-1.5 h-px w-[125px] bg-black"></i><i class="pointer-events-none absolute top-0.5 right-0 flex h-[23px] w-5 items-center justify-center border-r-2 border-b-2 border-[#777] bg-[#f0f0f0]"><svg class="h-1.5 w-2.5"><use href="#tri"/></svg></i></span>
            <button aria-label="세부 정보" class="ml-2.5"><svg class="block h-[18px] w-[18px]"><use href="#details"/></svg></button>
          </div>
          <div class="flex h-[34px] shrink-0 justify-between overflow-hidden bg-white">
            <div id="folders" class="flex gap-0.5 pt-0.5 pl-[3px]"></div>
            <div class="flex w-5 flex-col items-center bg-[#f0f0f0] pt-[7px]"><svg class="h-2 w-3 shrink-0"><use href="#chev"/></svg><i class="mt-1.5 h-[21px] w-[19px] shrink-0 bg-[#cdcdcd]"></i></div>
          </div>
        </section>
      </div>
      <div class="flex w-5 flex-col items-center pt-1.5 pb-[7px]"><svg class="h-2 w-3"><use href="#chev"/></svg><i class="mt-1.5 h-[21px] w-[18px] shrink-0 bg-[#cdcdcd]"></i><svg class="mt-auto h-2 w-3 rotate-180"><use href="#chev"/></svg></div>
    </div>
  </aside>
</div>

<footer class="flex h-7 shrink-0 items-center bg-[#f1f1f1] pt-1 pl-[7px] text-[17px] leading-6">
  <svg class="h-[18px] w-[18px]" viewBox="0 0 18 18"><circle cx="9" cy="9" r="8" fill="#f4f4f4" stroke="#999" stroke-width="1.300"/><path fill="#999" d="M9 14c-1-3-3-5-3-7 0-4 6-4 6 0 0 2-2 4-3 7z"/></svg>
  <svg class="ml-[17px] h-[18px] w-[18px]" viewBox="0 0 18 18"><circle cx="9" cy="9" r="7.800" fill="#fff" stroke="#111" stroke-width="1.600"/><circle cx="9" cy="5" r="1.500"/><path d="M7 7h4v2l-1 5H8L7 9z"/></svg>
  <svg class="ml-[17px] h-[18px] w-[18px]" viewBox="0 0 18 18"><circle cx="9" cy="9" r="8" fill="#f4f4f4" stroke="#999" stroke-width="1.300"/><circle cx="9" cy="6" r="3.200" fill="#999"/><path fill="#999" d="M3 14c0-6 12-6 12 0-3 4-9 4-12 0z"/></svg>
  <i class="mr-2.5 ml-3 h-3.5 w-px bg-[#888]"></i>
  <p class="flex-1 whitespace-pre">회전 각도를 선택하거나 값을 입력하십시오.  스냅을 위해 각도기에 가깝게 유지하십시오. Ctrl = 복사 토글</p>
  <i class="mr-2.5 h-3.5 w-px bg-[#888]"></i>
  <label for="angle" class="w-[40px]">각도</label>
  <input id="angle" value="7.6" class="mr-1.5 h-[26px] w-[250px] border border-b-0 border-[#abbdd0] bg-white pl-[3px] text-[16px]">
</footer>

<script>
  const icon = (id, cls) => `<button aria-label="${id}" class="${cls}"><svg class="h-8 w-8"><use href="#${id}"/></svg></button>`;
  const plain = 'flex h-10 w-[42px] items-center justify-center';
  const wide = 'flex h-10 w-11 items-center justify-center';
  const active = 'flex h-10 w-[42px] items-center justify-center border border-[#a9d0f0] bg-[#c5dff5]';
  const bits = {
    '|': '<i class="flex h-[38px] w-2 justify-center"><i class="w-px bg-[#888]"></i></i>',
    ':': '<i class="ml-px h-10 w-[5px] border-l-2 border-dotted border-[#bbb]"></i>',
    '#': '<i class="flex h-[45px] w-3 items-center border-l border-[#aaa] pl-1"><i class="h-10 border-l-2 border-dotted border-[#bbb]"></i></i>',
    'v': '<button aria-label="더 보기" class="flex h-10 w-5 items-center justify-center"><svg class="h-[7px] w-[11px]" viewBox="0 0 10 6" preserveAspectRatio="none"><path d="M0 0h10L5 6z"/></svg></button>'
  };
  const fill = (el, list, sep) => {
    document.getElementById(el).innerHTML = list.split(' ').map(k =>
      k === '-' ? sep : bits[k] || (k[0] === '+' ? icon(k.slice(1), wide) : k[0] === '*' ? icon(k.slice(1), active) : icon(k, plain))).join('');
  };
  fill('toolbar', ': cursor | eraser +pencil v +arc v +rect v | push offset move *rotate scale | tape text bucket | orbit hand zoom zoomall | whouse wruby wsend | ruby # iso top front right back left # shell | bool1 bool bool2 bool bool # shadow', '');
  const side = [['cursor','comp'],['bucket','eraser'],0,['pencil','freehand'],['rect','rrect'],['circle','polygon'],['arc2','arc'],['arc3','pie'],0,['move','push'],['*rotate','follow'],['scale','offset'],0,['tape','dim'],['protractor','text'],['axes','text3d'],0,['orbit','hand'],['zoom','zoomwin'],['zoomall','zoomprev'],0,['poscam','eye'],['walk','section']];
  const cell = 'flex h-[42px] w-[42px] items-center justify-center';
  const cellOn = 'flex h-[42px] w-[42px] items-center justify-center border border-[#a9d0f0] bg-[#c5dff5]';
  document.getElementById('sidebar').innerHTML = side.map(r => r
    ? r.map(k => k[0] === '*' ? icon(k.slice(1), cellOn) : icon(k, cell)).join('')
    : '<i class="col-span-2 mx-0.5 flex h-2 items-start pt-0.5"><i class="h-px w-full bg-[#888]"></i></i>').join('');
  document.getElementById('swatches').innerHTML = ['#fbcfce','#f99b9b','#f46767','#f13737','#ed0404','#cc0004','#990105','#670104','#fcdacf','#f8b39c','#f89068','#f56b35','#f04404','#cd3408','#982808','#671b06','#fee6d0','#fbcf9b']
    .map(c => `<button aria-label="${c}" class="h-[62px] w-[62px] border border-[#a0a0a0] bg-white p-px"><i class="block h-full w-full" style="background:${c}"></i></button>`).join('');
  document.getElementById('folders').innerHTML = '<button aria-label="폴더" class="flex h-[62px] w-[62px] justify-center border border-[#a0a0a0] bg-white pt-3"><svg class="block h-9 w-9" viewBox="0 0 36 36"><path fill="#7fb4dc" stroke="#567" d="m1 5 9-2 2 3 5-1v28H5z"/><path fill="#ddd" stroke="#666" d="M6 8 34 1l-1 30H8z"/><path fill="#b49a74" stroke="#555" d="M6 10 34 2l-2 33H9z"/></svg></button>'.repeat(3);
</script>
</body>
</html>
